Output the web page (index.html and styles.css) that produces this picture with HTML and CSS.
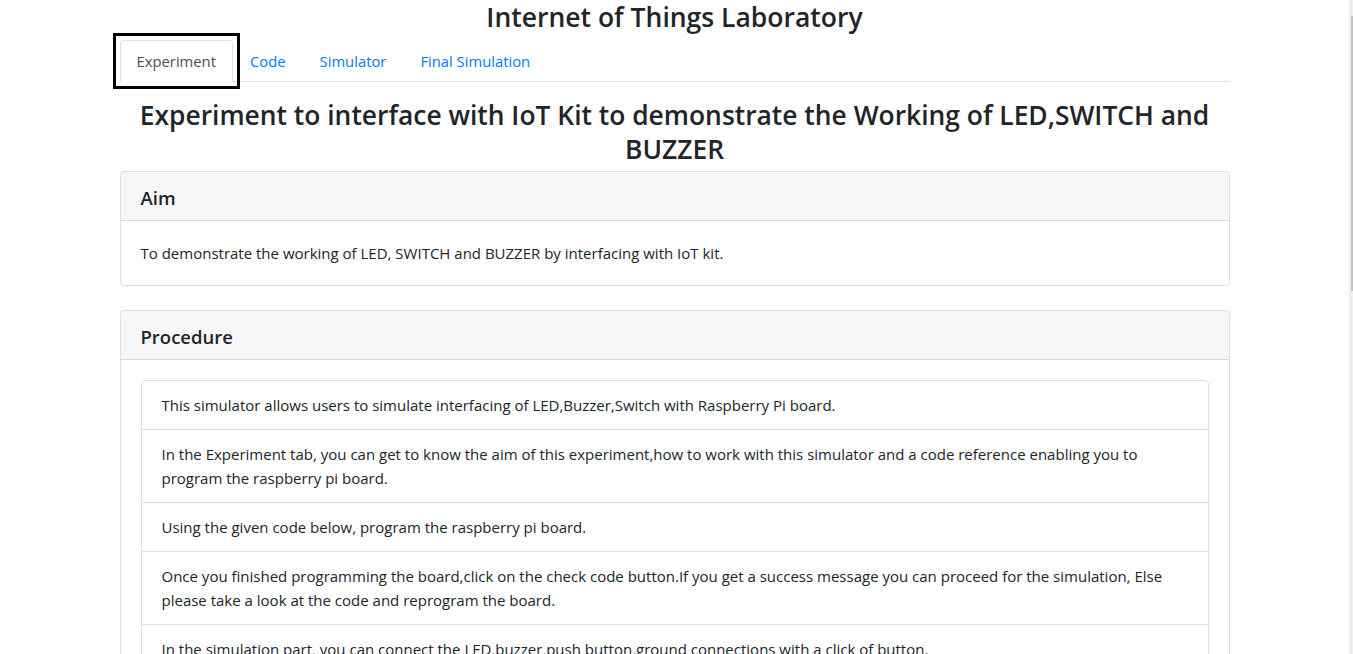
FILE: index.html
```html
<!DOCTYPE html>
<html lang="en">
<head>
<meta charset="utf-8">
<title>Internet of Things Laboratory</title>
<link rel="stylesheet" href="styles.css">
</head>
<body>
<div class="container">
  <h3 class="site-title">Internet of Things Laboratory</h3>
  <ul class="nav-tabs">
    <li class="nav-item focused"><a class="nav-link active" href="#">Experiment</a></li>
    <li class="nav-item"><a class="nav-link" href="#">Code</a></li>
    <li class="nav-item"><a class="nav-link" href="#">Simulator</a></li>
    <li class="nav-item"><a class="nav-link" href="#">Final Simulation</a></li>
  </ul>
  <h3 class="exp-title">Experiment to interface with IoT Kit to demonstrate the Working of LED,SWITCH and<br>BUZZER</h3>
  <div class="card">
    <div class="card-header"><h5>Aim</h5></div>
    <div class="card-body">To demonstrate the working of LED, SWITCH and BUZZER by interfacing with IoT kit.</div>
  </div>
  <div class="card">
    <div class="card-header"><h5>Procedure</h5></div>
    <div class="card-body">
      <ul class="list-group">
        <li class="list-item">This simulator allows users to simulate interfacing of LED,Buzzer,Switch with Raspberry Pi board.</li>
        <li class="list-item">In the Experiment tab, you can get to know the aim of this experiment,how to work with this simulator and a code reference enabling you to program the raspberry pi board.</li>
        <li class="list-item">Using the given code below, program the raspberry pi board.</li>
        <li class="list-item">Once you finished programming the board,click on the check code button.If you get a success message you can proceed for the simulation, Else please take a look at the code and reprogram the board.</li>
        <li class="list-item">In the simulation part, you can connect the LED,buzzer,push button,ground connections with a click of button.</li>
        <li class="list-item">After the connections are made, click on the run button to start the simulation.</li>
      </ul>
    </div>
  </div>
</div>
<div class="scrollbar"><div class="scrollbar-thumb"></div></div>
</body>
</html>
```
FILE: styles.css
```css
html, body {
  margin: 0;
  padding: 0;
}
body {
  font-family: "Open Sans", "Noto Sans", sans-serif;
  font-size: 15px;
  line-height: 24px;
  color: #212529;
  background: #fff;
  margin-right: 4px;
}
.container {
  width: 1110px;
  margin: 0 auto;
}
h3, h5 {
  margin: 0;
  font-weight: 600;
}
.site-title {
  font-size: 26.5px;
  line-height: 34px;
  text-align: center;
  margin-bottom: 6px;
}
.nav-tabs {
  list-style: none;
  margin: 0;
  padding: 0;
  display: flex;
  border-bottom: 1px solid #dee2e6;
}
.nav-item {
  margin-bottom: -1px;
}
.nav-item.focused {
  outline: 3px solid #000;
  outline-offset: 4px;
}
.nav-link {
  display: block;
  padding: 8px 16px;
  border: 1px solid transparent;
  border-top-left-radius: 4px;
  border-top-right-radius: 4px;
  color: #007bff;
  text-decoration: none;
  font-size: 14.8px;
}
.nav-link.active {
  color: #495057;
  border-color: #dee2e6 #dee2e6 #fff;
  background: #fff;
}
.exp-title {
  font-size: 26.4px;
  line-height: 33.5px;
  text-align: center;
  margin: 17px 0 5px;
}
.card {
  border: 1px solid rgba(0,0,0,.125);
  border-radius: 4px;
  margin-bottom: 24px;
  overflow: hidden;
}
.card-header {
  background: rgba(0,0,0,.03);
  border-bottom: 1px solid rgba(0,0,0,.125);
  padding: 14px 20px 10px;
}
.card-header h5 {
  font-size: 18.5px;
  line-height: 24px;
}
.card-body {
  padding: 20px;
}
.list-group {
  list-style: none;
  margin: 0;
  padding: 0;
  border: 1px solid rgba(0,0,0,.125);
  border-radius: 4px;
}
.list-item {
  padding: 12px 20px;
  border-bottom: 1px solid rgba(0,0,0,.125);
}
.list-item:last-child {
  border-bottom: 0;
}
.scrollbar {
  position: fixed;
  top: 0;
  right: 0;
  width: 4px;
  height: 100%;
  background: #f0f0f0;
}
.scrollbar-thumb {
  margin: 16px 0 0 2px;
  width: 2px;
  height: 275px;
  background: #c2c2c2;
}
```
